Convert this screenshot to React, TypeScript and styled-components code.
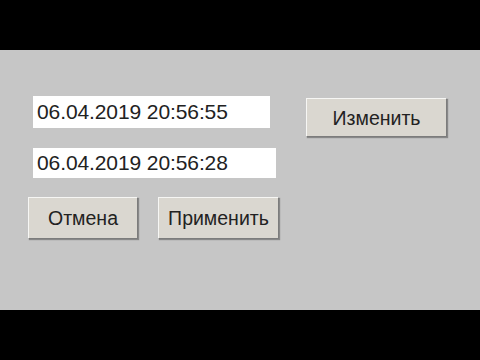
import React from "react";
import styled, { createGlobalStyle } from "styled-components";

const Global = createGlobalStyle`
  html, body { margin: 0; padding: 0; background: #000; }
  body { font-family: "Liberation Sans", Arial, sans-serif; }
`;

const Frame = styled.div`
  width: 480px;
  height: 360px;
  background: #000;
  display: flex;
  flex-direction: column;
  justify-content: center;
`;

const Panel = styled.div`
  height: 260px;
  background: #c6c6c6;
  box-sizing: border-box;
  padding-top: 46px;
  display: flex;
  flex-direction: column;
`;

const Row = styled.div<{ $top?: number; $left?: number }>`
  display: flex;
  align-items: flex-start;
  margin-top: ${(p) => p.$top ?? 0}px;
  padding-left: ${(p) => p.$left ?? 0}px;
  gap: 20px;
`;

const Field = styled.div<{ $w: number; $h: number }>`
  width: ${(p) => p.$w}px;
  height: ${(p) => p.$h}px;
  background: #fff;
  box-sizing: border-box;
  padding-left: 4px;
  display: flex;
  align-items: center;
  font-size: 21px;
  color: #222;
  letter-spacing: -0.1px;
`;

const Button = styled.div<{ $w: number; $h: number; $ml?: number; $mt?: number }>`
  width: ${(p) => p.$w}px;
  height: ${(p) => p.$h}px;
  margin-left: ${(p) => p.$ml ?? 0}px;
  margin-top: ${(p) => p.$mt ?? 0}px;
  box-sizing: border-box;
  background: #dad7d0;
  border: 1px solid;
  border-color: #f6f6f4 #7c7c7c #7c7c7c #f6f6f4;
  box-shadow: 1px 1px 1px rgba(60, 60, 60, 0.45);
  display: flex;
  align-items: center;
  justify-content: center;
  font-size: 19.5px;
  color: #222;
  padding-top: 1px;
`;

export default function App() {
  return (
    <>
      <Global />
      <Frame>
        <Panel>
          <Row $left={33}>
            <Field $w={237} $h={32}>06.04.2019 20:56:55</Field>
            <Button $w={141} $h={39} $ml={16} $mt={2}>Изменить</Button>
          </Row>
          <Row $top={11} $left={33}>
            <Field $w={243} $h={30}>06.04.2019 20:56:28</Field>
          </Row>
          <Row $top={19} $left={28}>
            <Button $w={110} $h={42}>Отмена</Button>
            <Button $w={121} $h={42}>Применить</Button>
          </Row>
        </Panel>
      </Frame>
    </>
  );
}
